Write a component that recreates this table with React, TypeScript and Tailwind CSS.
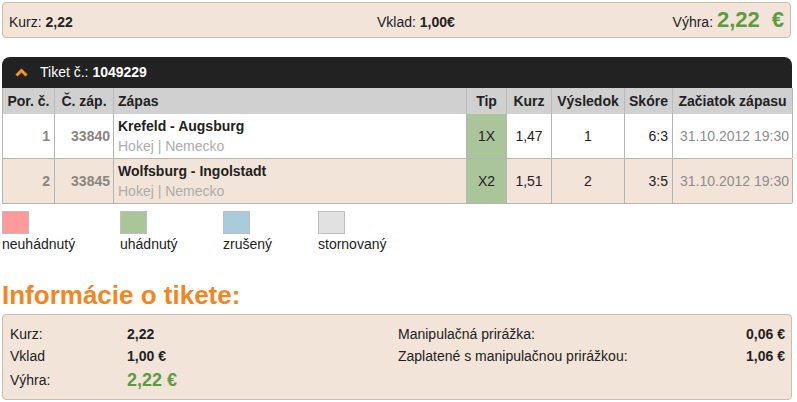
import React from 'react';

type Bet = {
  order: number;
  matchNo: string;
  match: string;
  info: string;
  tip: string;
  odds: string;
  result: string;
  score: string;
  start: string;
};

const bets: Bet[] = [
  {
    order: 1,
    matchNo: '33840',
    match: 'Krefeld - Augsburg',
    info: 'Hokej | Nemecko',
    tip: '1X',
    odds: '1,47',
    result: '1',
    score: '6:3',
    start: '31.10.2012 19:30',
  },
  {
    order: 2,
    matchNo: '33845',
    match: 'Wolfsburg - Ingolstadt',
    info: 'Hokej | Nemecko',
    tip: 'X2',
    odds: '1,51',
    result: '2',
    score: '3:5',
    start: '31.10.2012 19:30',
  },
];

const legend = [
  { label: 'neuhádnutý', color: 'bg-[#ff9a9a]', width: 'w-[118px]' },
  { label: 'uhádnutý', color: 'bg-[#abc59b]', width: 'w-[103px]' },
  { label: 'zrušený', color: 'bg-[#a9cbdc]', width: 'w-[95px]' },
  { label: 'stornovaný', color: 'bg-[#e1e1e1]', width: 'w-[100px]' },
];

const cols = 'grid grid-cols-[52px_59px_353px_40px_45px_73px_48px_120px]';

export default function App() {
  return (
    <div className="h-[402px] w-[797px] overflow-hidden bg-white pl-[2px] pt-[2px] font-['Liberation_Sans',Arial,sans-serif] text-[#222]">
      {/* summary bar */}
      <div className="grid h-[36px] w-[789px] grid-cols-[368px_1fr_auto] items-baseline rounded-[4px] border border-[#cdbcac] bg-[#f2e4d8] pl-[6px] pr-[6px] pt-[6px] text-[14px]">
        <span>
          Kurz: <b>2,22</b>
        </span>
        <span>
          Vklad: <b>1,00€</b>
        </span>
        <span>
          Výhra:{' '}
          <b className="text-[22px] leading-none text-[#5c9c3e]">
            2,22<span className="ml-[12px]">€</span>
          </b>
        </span>
      </div>

      {/* ticket */}
      <div className="mt-[19px] w-[790px]">
        <div className="flex h-[31px] items-center rounded-t-[8px] bg-[#222] pl-[13px] text-[14px] text-white">
          <svg width="13" height="9" viewBox="0 0 13 9" className="mr-[12px]">
            <polyline
              points="1.5,7.5 6.5,2.5 11.5,7.5"
              fill="none"
              stroke="#f7941d"
              strokeWidth="3"
            />
          </svg>
          <span>
            Tiket č.: <b>1049229</b>
          </span>
        </div>

        <div className={`${cols} h-[26px] border-l border-[#b4b4b4] bg-[#d0d0d0] text-[14px] font-bold`}>
          {['Por. č.', 'Č. záp.', 'Zápas', 'Tip', 'Kurz', 'Výsledok', 'Skóre', 'Začiatok zápasu'].map(
            (h) => (
              <div
                key={h}
                className={`flex items-center border-r border-[#bababa] px-[4px] ${
                  h === 'Zápas' ? 'justify-start' : 'justify-center'
                }`}
              >
                {h}
              </div>
            )
          )}
        </div>

        {bets.map((bet, i) => (
          <div
            key={bet.order}
            className={`${cols} h-[45px] border-b border-l border-[#b4b4b4] text-[14px] ${
              i % 2 === 0 ? 'bg-white' : 'bg-[#f2e4d8]'
            }`}
          >
            <div className="flex items-center justify-end border-r border-[#b4b4b4] pr-[4px] font-bold text-[#8a8580]">
              {bet.order}
            </div>
            <div className="flex items-center justify-end border-r border-[#b4b4b4] pr-[3px] font-bold text-[#8a8580]">
              {bet.matchNo}
            </div>
            <div className="border-r border-[#b4b4b4] pl-[4px] pt-[2px] leading-[20px]">
              <div className="font-bold">{bet.match}</div>
              <div className="text-[#acacac]">{bet.info}</div>
            </div>
            <div className="flex items-center justify-center border-r border-[#b4b4b4] bg-[#abc59b]">
              {bet.tip}
            </div>
            <div className="flex items-center justify-center border-r border-[#b4b4b4]">
              {bet.odds}
            </div>
            <div className="flex items-center justify-center border-r border-[#b4b4b4]">
              {bet.result}
            </div>
            <div className="flex items-center justify-end border-r border-[#b4b4b4] pr-[4px]">
              {bet.score}
            </div>
            <div className="flex items-center justify-end border-r border-[#b4b4b4] pr-[3px] text-[#8c8c8c]">
              {bet.start}
            </div>
          </div>
        ))}
      </div>

      {/* legend */}
      <div className="mt-[7px] flex text-[14px] leading-[16px]">
        {legend.map((l) => (
          <div key={l.label} className={l.width}>
            <div className={`h-[23px] w-[27px] border border-[#bdbdbd] ${l.color}`} />
            <div className="mt-[2px]">{l.label}</div>
          </div>
        ))}
      </div>

      {/* info */}
      <h2 className="mt-[28px] text-[26px] font-bold leading-[30px] text-[#f5861f]">
        Informácie o tikete:
      </h2>
      <div className="mt-[4px] grid h-[86px] w-[790px] grid-cols-[117px_271px_1fr_auto] grid-rows-[21px_22px_26px] items-center rounded-[4px] border border-[#cdbcac] bg-[#f2e4d8] pl-[7px] pr-[6px] pt-[9px] text-[14px]">
        <span>Kurz:</span>
        <b>2,22</b>
        <span>Manipulačná prirážka:</span>
        <b className="text-right">0,06 €</b>
        <span>Vklad</span>
        <b>1,00 €</b>
        <span>Zaplatené s manipulačnou prirážkou:</span>
        <b className="text-right">1,06 €</b>
        <span>Výhra:</span>
        <b className="text-[18px] text-[#5c9c3e]">2,22 €</b>
        <span />
        <span />
      </div>
    </div>
  );
}
